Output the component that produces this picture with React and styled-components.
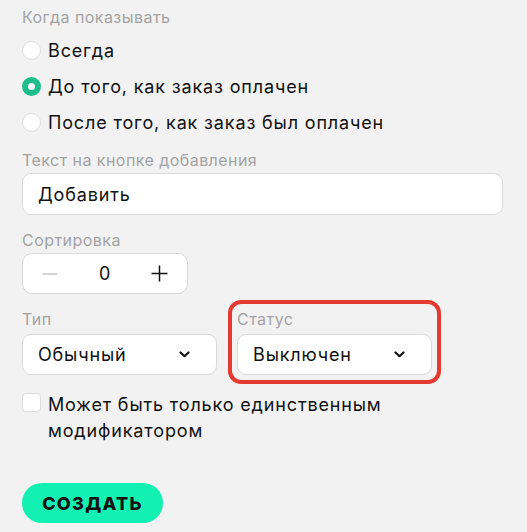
import React, { useState } from 'react';
import styled, { createGlobalStyle, css } from 'styled-components';

const GlobalStyle = createGlobalStyle`
  html, body {
    margin: 0;
    padding: 0;
    background: #f2f2f2;
  }
  body {
    font-family: Inter, "Noto Sans", sans-serif;
    color: #111;
    letter-spacing: 0.85px;
  }
  * {
    box-sizing: border-box;
  }
`

const Form = styled.div`
  width: 527px;
  min-height: 532px;
  padding: 7px 24px 0 22px;
  display: flex;
  flex-direction: column;
`

const Field = styled.div`
  display: flex;
  flex-direction: column;
  gap: ${props => props.gap || 4}px;
  margin-top: ${props => props.top || 0}px;
  ${props => props.highlight && css`
    border-radius: 4px;
    outline: 4px solid #e53a32;
    outline-offset: 5px;
  `}
`

const Label = styled.div`
  font-size: 16px;
  line-height: 20px;
  color: #a3a3a3;
  letter-spacing: 0.45px;
`

const RadioList = styled.div`
  display: flex;
  flex-direction: column;
`

const RadioRow = styled.label`
  display: flex;
  align-items: center;
  gap: 7px;
  height: 36px;
  font-size: 18px;
  cursor: pointer;
`

const RadioDot = styled.span`
  width: 19px;
  height: 19px;
  border-radius: 50%;
  flex-shrink: 0;
  background: #fff;
  border: 1px solid #dedede;
  ${props => props.checked && css`
    background: #fff;
    border: 6px solid #1ebe8c;
  `}
`

const TextInput = styled.input`
  height: 42px;
  width: 100%;
  border: 1px solid #d9d9d9;
  border-radius: 9px;
  background: #fff;
  padding: 0 15px;
  font-family: inherit;
  font-size: 18px;
  letter-spacing: 0.85px;
  color: #111;
  outline: none;
`

const Stepper = styled.div`
  width: 166px;
  height: 41px;
  display: grid;
  grid-template-columns: repeat(3, 1fr);
  align-items: center;
  background: #fff;
  border: 1px solid #d9d9d9;
  border-radius: 10px;
`

const StepButton = styled.button`
  border: none;
  background: none;
  height: 100%;
  padding: 0;
  display: flex;
  align-items: center;
  justify-content: center;
  color: ${props => props.disabled ? '#c4c4c4' : '#111'};
  cursor: pointer;
`

const StepValue = styled.div`
  text-align: center;
  font-size: 18px;
`

const Row = styled.div`
  display: grid;
  grid-template-columns: 195px 195px;
  gap: 20px;
  margin-top: 15px;
`

const Select = styled.div`
  height: 41px;
  display: flex;
  align-items: center;
  justify-content: space-between;
  background: #fff;
  border: 1px solid #d9d9d9;
  border-radius: 9px;
  padding: 0 26px 0 15px;
  font-size: 18px;
  cursor: pointer;
`

const CheckRow = styled.label`
  display: flex;
  align-items: flex-start;
  gap: 7px;
  margin-top: 17px;
  font-size: 18px;
  line-height: 26px;
  cursor: pointer;
`

const CheckBox = styled.span`
  width: 19px;
  height: 19px;
  margin-top: 1px;
  flex-shrink: 0;
  border-radius: 4px;
  background: #fff;
  border: 1px solid #dedede;
`

const SubmitButton = styled.button`
  margin-top: 39px;
  width: 141px;
  height: 40px;
  border: none;
  border-radius: 20px;
  background: #12f0b2;
  color: #111;
  font-family: inherit;
  font-size: 18px;
  font-weight: 800;
  letter-spacing: 1.3px;
  text-transform: uppercase;
  cursor: pointer;
`

const Chevron = () => (
  <svg width="11" height="7" viewBox="0 0 11 7" fill="none">
    <path d="M1.5 1.5L5.5 5.2L9.5 1.5" stroke="#111" strokeWidth="2.2" strokeLinecap="round" strokeLinejoin="round" />
  </svg>
)

const Minus = () => (
  <svg width="16" height="16" viewBox="0 0 16 16">
    <path d="M0.5 8H15.5" stroke="currentColor" strokeWidth="1.5" />
  </svg>
)

const Plus = () => (
  <svg width="17" height="17" viewBox="0 0 17 17">
    <path d="M0.5 8.5H16.5M8.5 0.5V16.5" stroke="currentColor" strokeWidth="1.5" />
  </svg>
)

const options = [
  'Всегда',
  'До того, как заказ оплачен',
  'После того, как заказ был оплачен',
]

const App = () => {
  const [when, setWhen] = useState(1)
  const [sort, setSort] = useState(0)

  return (
    <Form>
      <GlobalStyle />
      <Field gap={5}>
        <Label>Когда показывать</Label>
        <RadioList>
          {options.map((text, i) => (
            <RadioRow key={text} onClick={() => setWhen(i)}>
              <RadioDot checked={when === i} />
              {text}
            </RadioRow>
          ))}
        </RadioList>
      </Field>
      <Field top={10} gap={3}>
        <Label>Текст на кнопке добавления</Label>
        <TextInput defaultValue="Добавить" />
      </Field>
      <Field top={15} gap={3}>
        <Label>Сортировка</Label>
        <Stepper>
          <StepButton disabled={sort <= 0} onClick={() => setSort(sort - 1)}><Minus /></StepButton>
          <StepValue>{sort}</StepValue>
          <StepButton onClick={() => setSort(sort + 1)}><Plus /></StepButton>
        </Stepper>
      </Field>
      <Row>
        <Field gap={5}>
          <Label>Тип</Label>
          <Select>Обычный<Chevron /></Select>
        </Field>
        <Field gap={5} highlight>
          <Label>Статус</Label>
          <Select>Выключен<Chevron /></Select>
        </Field>
      </Row>
      <CheckRow>
        <CheckBox />
        <span>Может быть только единственным<br />модификатором</span>
      </CheckRow>
      <div>
        <SubmitButton>Создать</SubmitButton>
      </div>
    </Form>
  )
}

export default App;
